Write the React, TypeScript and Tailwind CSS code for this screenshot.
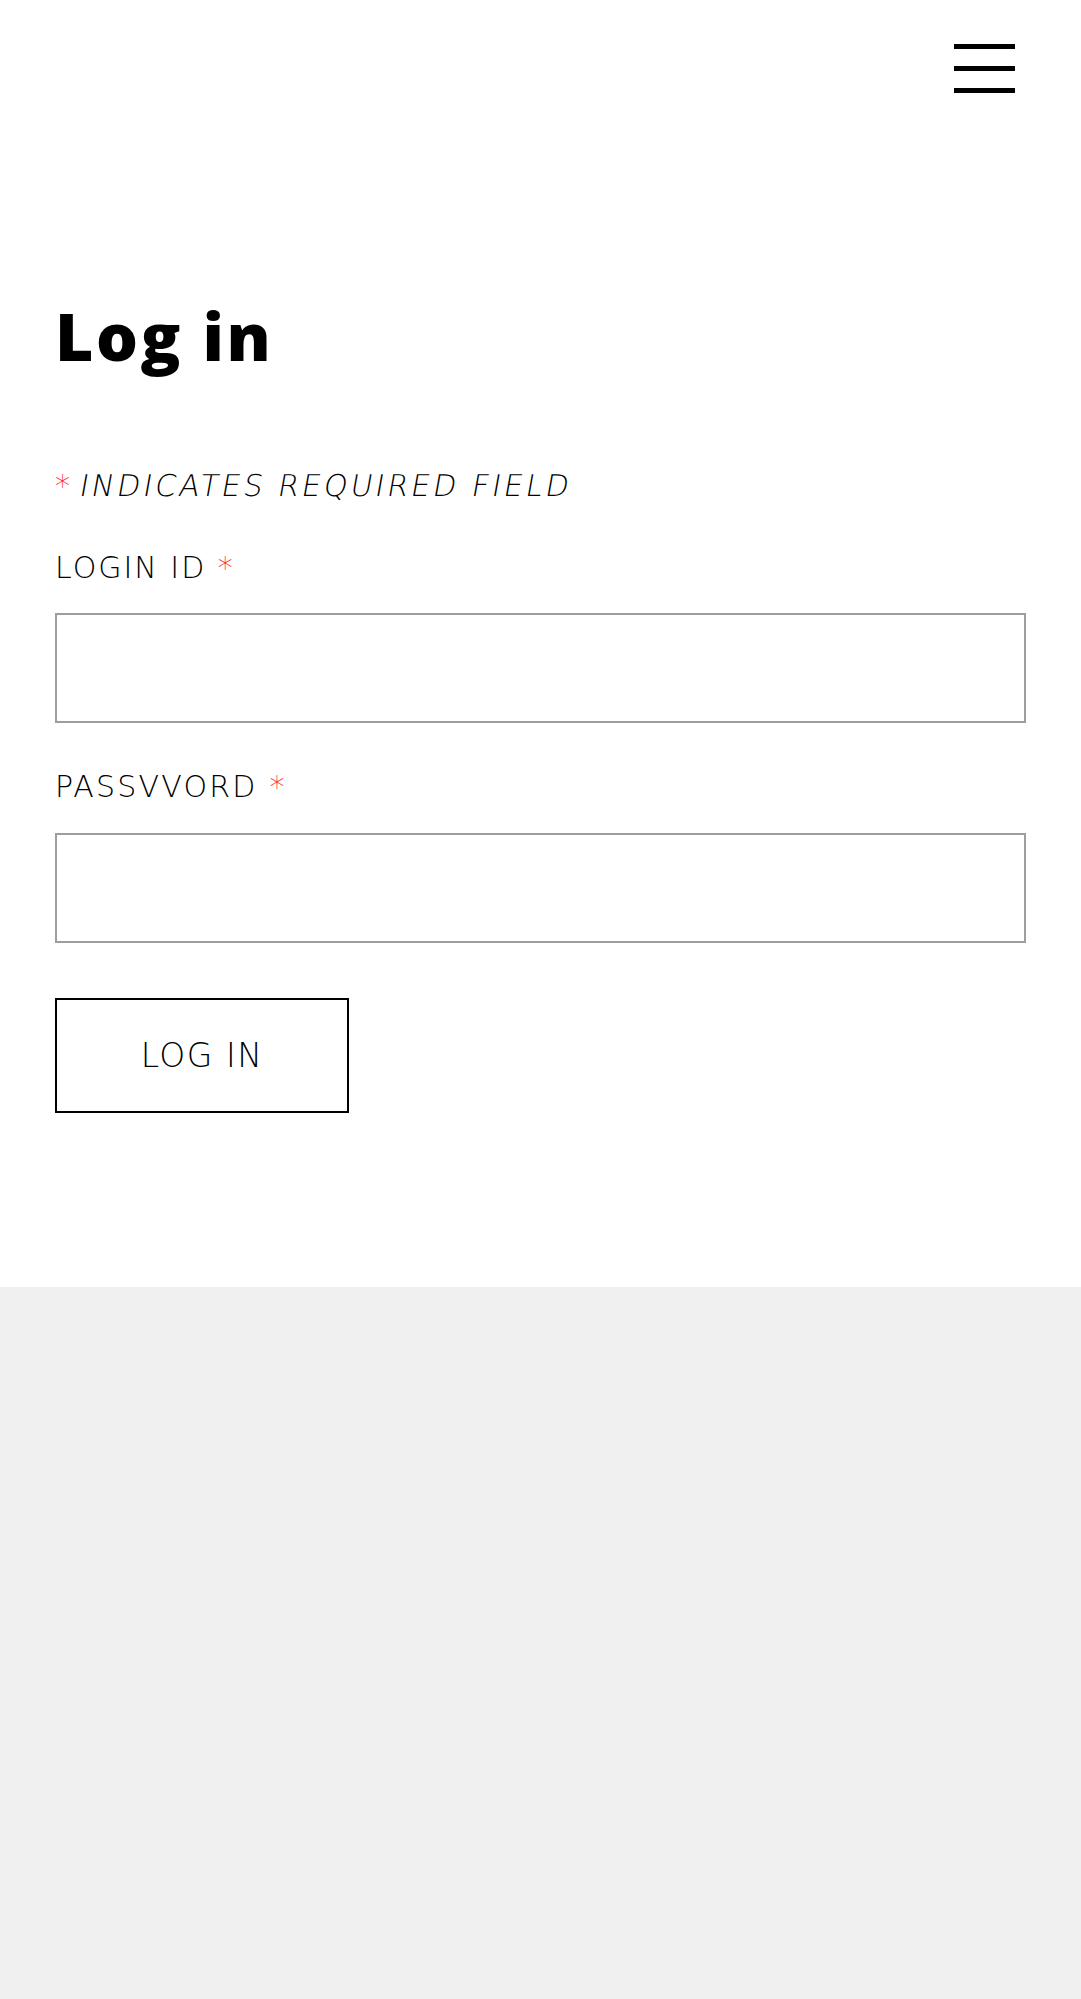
export default function App() {
  return (
    <div className="min-h-[1999px] flex flex-col bg-[#f0f0f0] font-['Open_Sans',sans-serif] text-black">
      {/* Top bar with menu button */}
      <div className="bg-white">
        <header className="flex justify-end pt-[44px] pr-[66px]">
          <button aria-label="Menu" className="flex flex-col gap-[17px] w-[61px]">
            <span className="block h-[5px] w-full bg-black" />
            <span className="block h-[5px] w-full bg-black" />
            <span className="block h-[5px] w-full bg-black" />
          </button>
        </header>

        {/* Login form */}
        <main className="px-[55px] pb-[174px]">
          <h1 className="mt-[209px] text-[66px] leading-[66px] font-extrabold tracking-[2.5px]">Log in</h1>

          {/* thin oblique: skew the extralight face, the real oblique face is too heavy */}
          <p className="mt-[103px] font-['DejaVu_Sans',sans-serif] text-[30px] leading-[30px] font-extralight">
            <span className="text-[#ff2a2a]">*</span>{" "}
            <span className="inline-block skew-x-[-10deg] tracking-[3px]">INDICATES REQUIRED FIELD</span>
          </p>

          <form className="flex flex-col font-['DejaVu_Sans',sans-serif] font-extralight">
            <label htmlFor="login-id" className="mt-[52px] text-[30px] leading-[30px] tracking-[2px]">
              LOGIN ID <span className="text-[#ff2a2a]">*</span>
            </label>
            <input
              id="login-id"
              type="text"
              className="mt-[30px] h-[110px] w-full border-2 border-[#9e9e9e] bg-white outline-none"
            />

            <label htmlFor="password" className="mt-[49px] text-[30px] leading-[30px] tracking-[2.2px]">
              PASSVVORD <span className="text-[#ff2a2a]">*</span>
            </label>
            <input
              id="password"
              type="password"
              className="mt-[31px] h-[110px] w-full border-2 border-[#9e9e9e] bg-white outline-none"
            />

            <button
              type="submit"
              className="mt-[55px] h-[115px] w-[294px] border-2 border-black bg-white text-[33px] leading-none tracking-[1.5px]"
            >
              LOG IN
            </button>
          </form>
        </main>
      </div>

      {/* Footer area */}
      <footer className="flex-1 bg-[#f0f0f0]" />
    </div>
  );
}
